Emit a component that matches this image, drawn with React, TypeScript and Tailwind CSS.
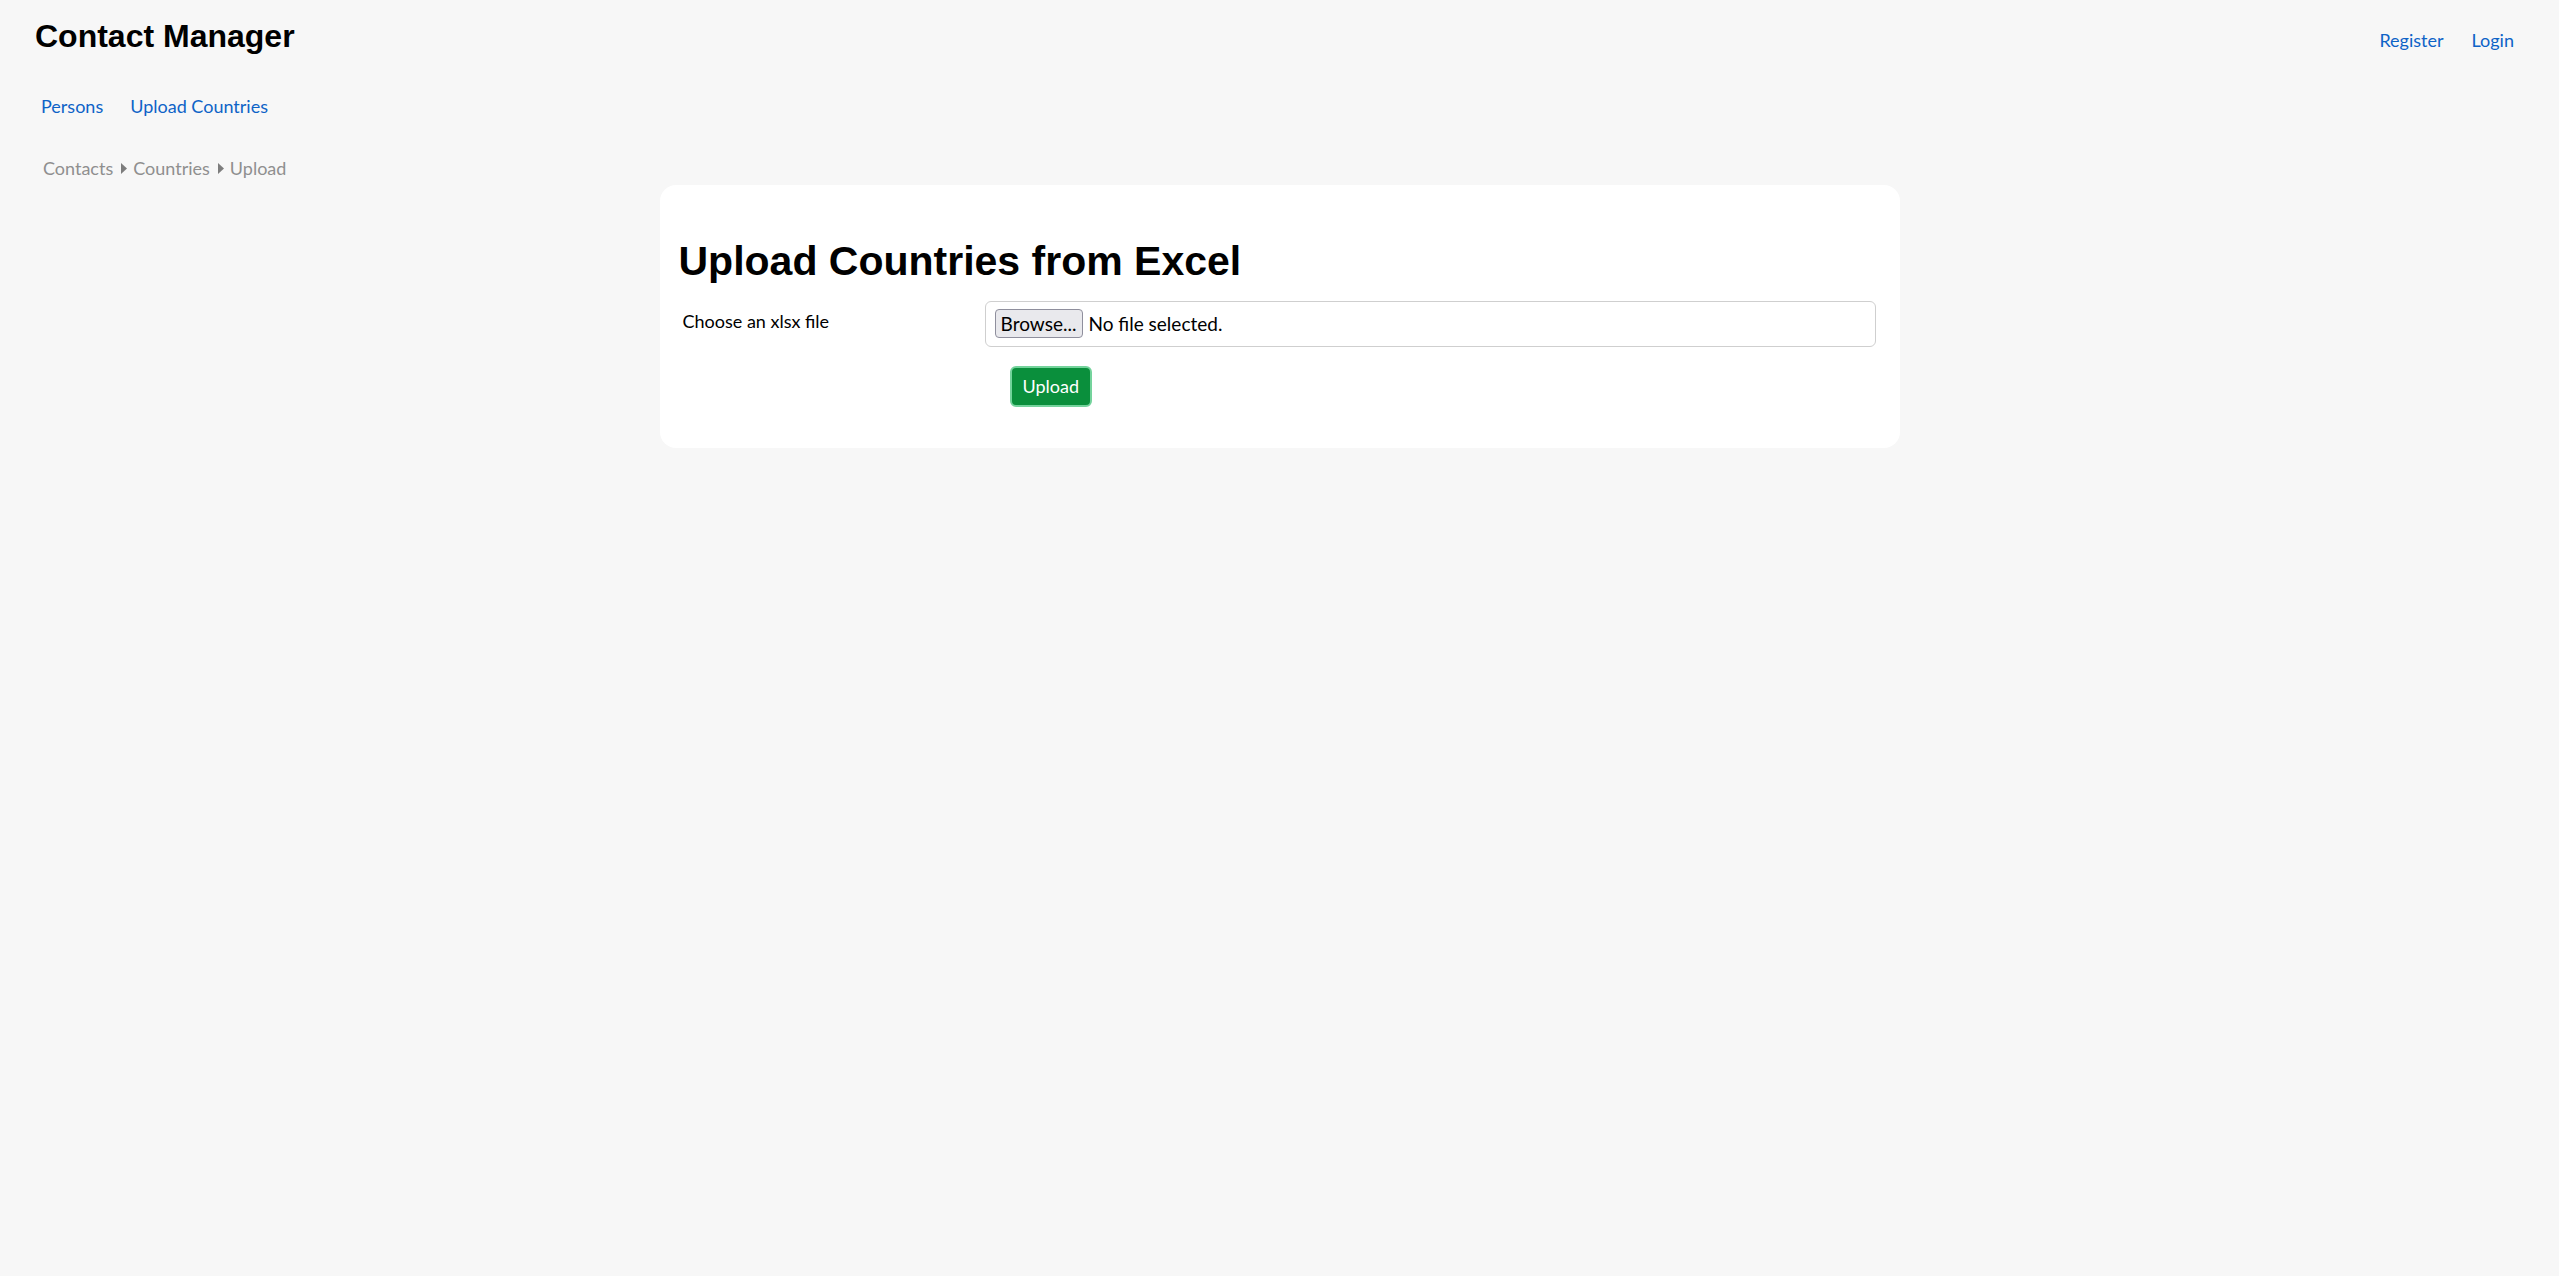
import React from "react";

function Caret() {
  return (
    <svg width="6" height="11" viewBox="0 0 6 11" className="ml-[8px] mr-[6px] shrink-0">
      <path d="M0 0 L6 5.5 L0 11 Z" fill="#7d7d7d" />
    </svg>
  );
}

export default function App() {
  return (
    <div className="min-h-screen bg-[#f7f7f7] font-['Lato','Open_Sans',sans-serif] text-[18px] leading-[27px] text-black">
      {/* top bar */}
      <header className="flex items-start justify-between pl-[35px] pr-[31px] pt-[17px]">
        <h1 className="font-['Liberation_Sans',Arial,sans-serif] text-[32px] font-bold leading-[1.2]">
          Contact Manager
        </h1>
        <nav className="mt-[10px] flex">
          <a href="#" className="px-[14px] text-[#0e63c7]">
            Register
          </a>
          <a href="#" className="px-[14px] text-[#0e63c7]">
            Login
          </a>
        </nav>
      </header>

      <nav className="mt-[38px] flex pl-[27px]">
        <a href="#" className="px-[14px] text-[#0e63c7]">
          Persons
        </a>
        <a href="#" className="px-[13px] text-[#0e63c7]">
          Upload Countries
        </a>
      </nav>

      {/* breadcrumb */}
      <div className="mt-[35px] flex items-center pl-[43px] text-[#8f8f8f]">
        <span>Contacts</span>
        <Caret />
        <span>Countries</span>
        <Caret />
        <span>Upload</span>
      </div>

      <div className="mx-auto mt-[3px] w-[1240px] rounded-[16px] bg-white pb-[41px] pl-[19px] pr-[24px] pt-[52px]">
        <h2 className="font-['Liberation_Sans',Arial,sans-serif] text-[41px] font-bold leading-[1.2]">
          Upload Countries from Excel
        </h2>
        <div className="mt-[14px] flex">
          <label className="w-[306px] shrink-0 pl-[4px] pt-[7px]">Choose an xlsx file</label>
          <div className="flex-1">
            <div className="flex h-[46px] items-start rounded-[6px] border border-[#cfcfcf] bg-white pl-[9px] pt-[7px] text-[19px] leading-[27px]">
              <span className="flex h-[29px] w-[88px] items-center justify-center rounded-[4px] border border-[#8f8f9d] bg-[#e9e9ed]">
                Browse...
              </span>
              <span className="ml-[6px] leading-[29px]">No file selected.</span>
            </div>
            <button
              type="button"
              className="ml-[25px] mt-[19px] h-[41px] rounded-[6px] border-2 border-[#74d39c] bg-[#0a8f3c] px-[11px] text-white"
            >
              Upload
            </button>
          </div>
        </div>
      </div>
    </div>
  );
}
